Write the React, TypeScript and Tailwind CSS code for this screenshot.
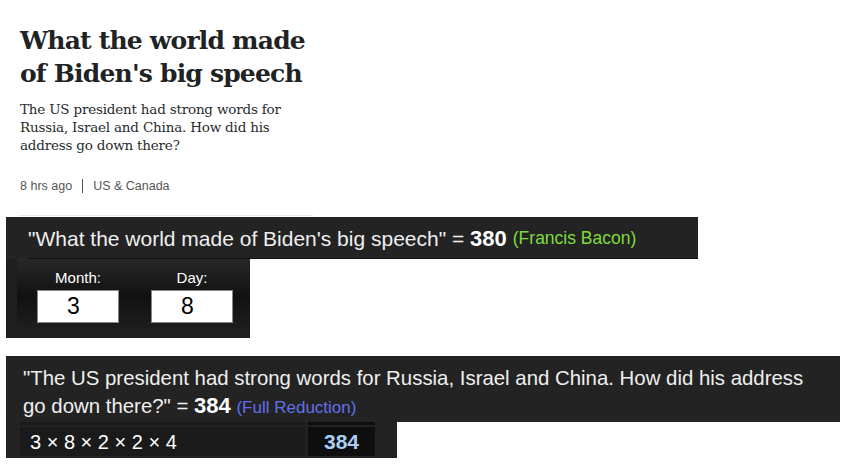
import React from 'react';

const sans = "font-['Liberation_Sans',Arial,sans-serif]";

function Story() {
    return (
        <div className="pl-5">
            <h1 className="pt-[24px] font-['DejaVu_Serif',serif] font-bold text-[25px] leading-[33px] tracking-[-0.8px] text-[#202224]">
                What the world made<br />of Biden's big speech
            </h1>
            <p className="mt-[10px] font-['DejaVu_Serif',serif] text-[13.5px] leading-[18px] tracking-[-0.2px] text-[#2a2b2d]">
                The US president had strong words for<br />
                Russia, Israel and China. How did his<br />
                address go down there?
            </p>
            <div className={`mt-[24px] flex items-center h-4 text-[12.5px] text-[#545658] ${sans}`}>
                <span>8 hrs ago</span>
                <span className="mx-[10px] w-px h-[14px] bg-[#545658]"></span>
                <span>US &amp; Canada</span>
            </div>
            <div className="mt-[21px] w-[294px] h-px bg-[#e8e8e8] -ml-px"></div>
        </div>
    );
}

function DateInput({ label, value }: { label: string, value: string }) {
    return (
        <div className="flex flex-col items-center w-[82px]">
            <span className="text-[15px] leading-[18px] text-white">{label}</span>
            <div className="mt-[3px] w-[82px] h-[33px] bg-white border border-[#888] flex items-center pl-[29px] text-[23px] text-black">
                {value}
            </div>
        </div>
    );
}

export default function App() {
    return (
        <div className={`w-[860px] h-[468px] bg-white overflow-hidden ${sans}`}>
            <Story />

            <div className="mt-[1px] ml-[6px] w-[692px] h-[42px] bg-[#232323] pl-[22px]">
                <div className="h-full flex items-center pt-[2px] border-b border-[#111] text-[21px] text-[#efefef] whitespace-nowrap">
                    <span>"What the world made of Biden's big speech" =&nbsp;</span>
                    <span className="font-bold text-[22px] text-white">380</span>
                    <span className="ml-[6px] text-[17.5px] text-[#7fdc3a]">(Francis Bacon)</span>
                </div>
            </div>

            <div className="ml-[6px] w-[244px] h-[79px] bg-[#1e1e1e] pl-[11px] pb-[5px]">
                <div className="h-full bg-gradient-to-b from-[#282828] via-[#111] to-[#1f1f1f] flex gap-[32px] pl-[20px] pt-[10px]">
                    <DateInput label="Month:" value="3" />
                    <DateInput label="Day:" value="8" />
                </div>
            </div>

            <div className="mt-[18px] ml-[6px] w-[834px] h-[66px] bg-[#232323] pl-[17px] pt-[9px] text-[20.4px] leading-[27px] text-[#efefef]">
                "The US president had strong words for Russia, Israel and China. How did his address<br />
                go down there?" = <span className="font-bold text-[22px] text-white">384</span>{' '}
                <span className="text-[17px] text-[#6270ee]">(Full Reduction)</span>
            </div>

            <div className="ml-[6px] w-[391px] h-[36px] bg-[#222] pl-[14px] flex flex-col gap-[2px]">
                <div className="flex gap-[3px] h-[3px]">
                    <div className="w-[285px] bg-[#1a1a1a]"></div>
                    <div className="w-[67px] bg-[#0e0e0e]"></div>
                </div>
                <div className="flex gap-[3px] h-[29px]">
                    <div className="w-[285px] bg-[#1a1a1a] flex items-center pl-[10px] text-[20px] text-white">
                        3 × 8 × 2 × 2 × 4
                    </div>
                    <div className="w-[67px] bg-[#0e0e0e] flex items-center justify-center font-bold text-[21px] text-[#a9cef5]">
                        384
                    </div>
                </div>
            </div>
        </div>
    );
}
